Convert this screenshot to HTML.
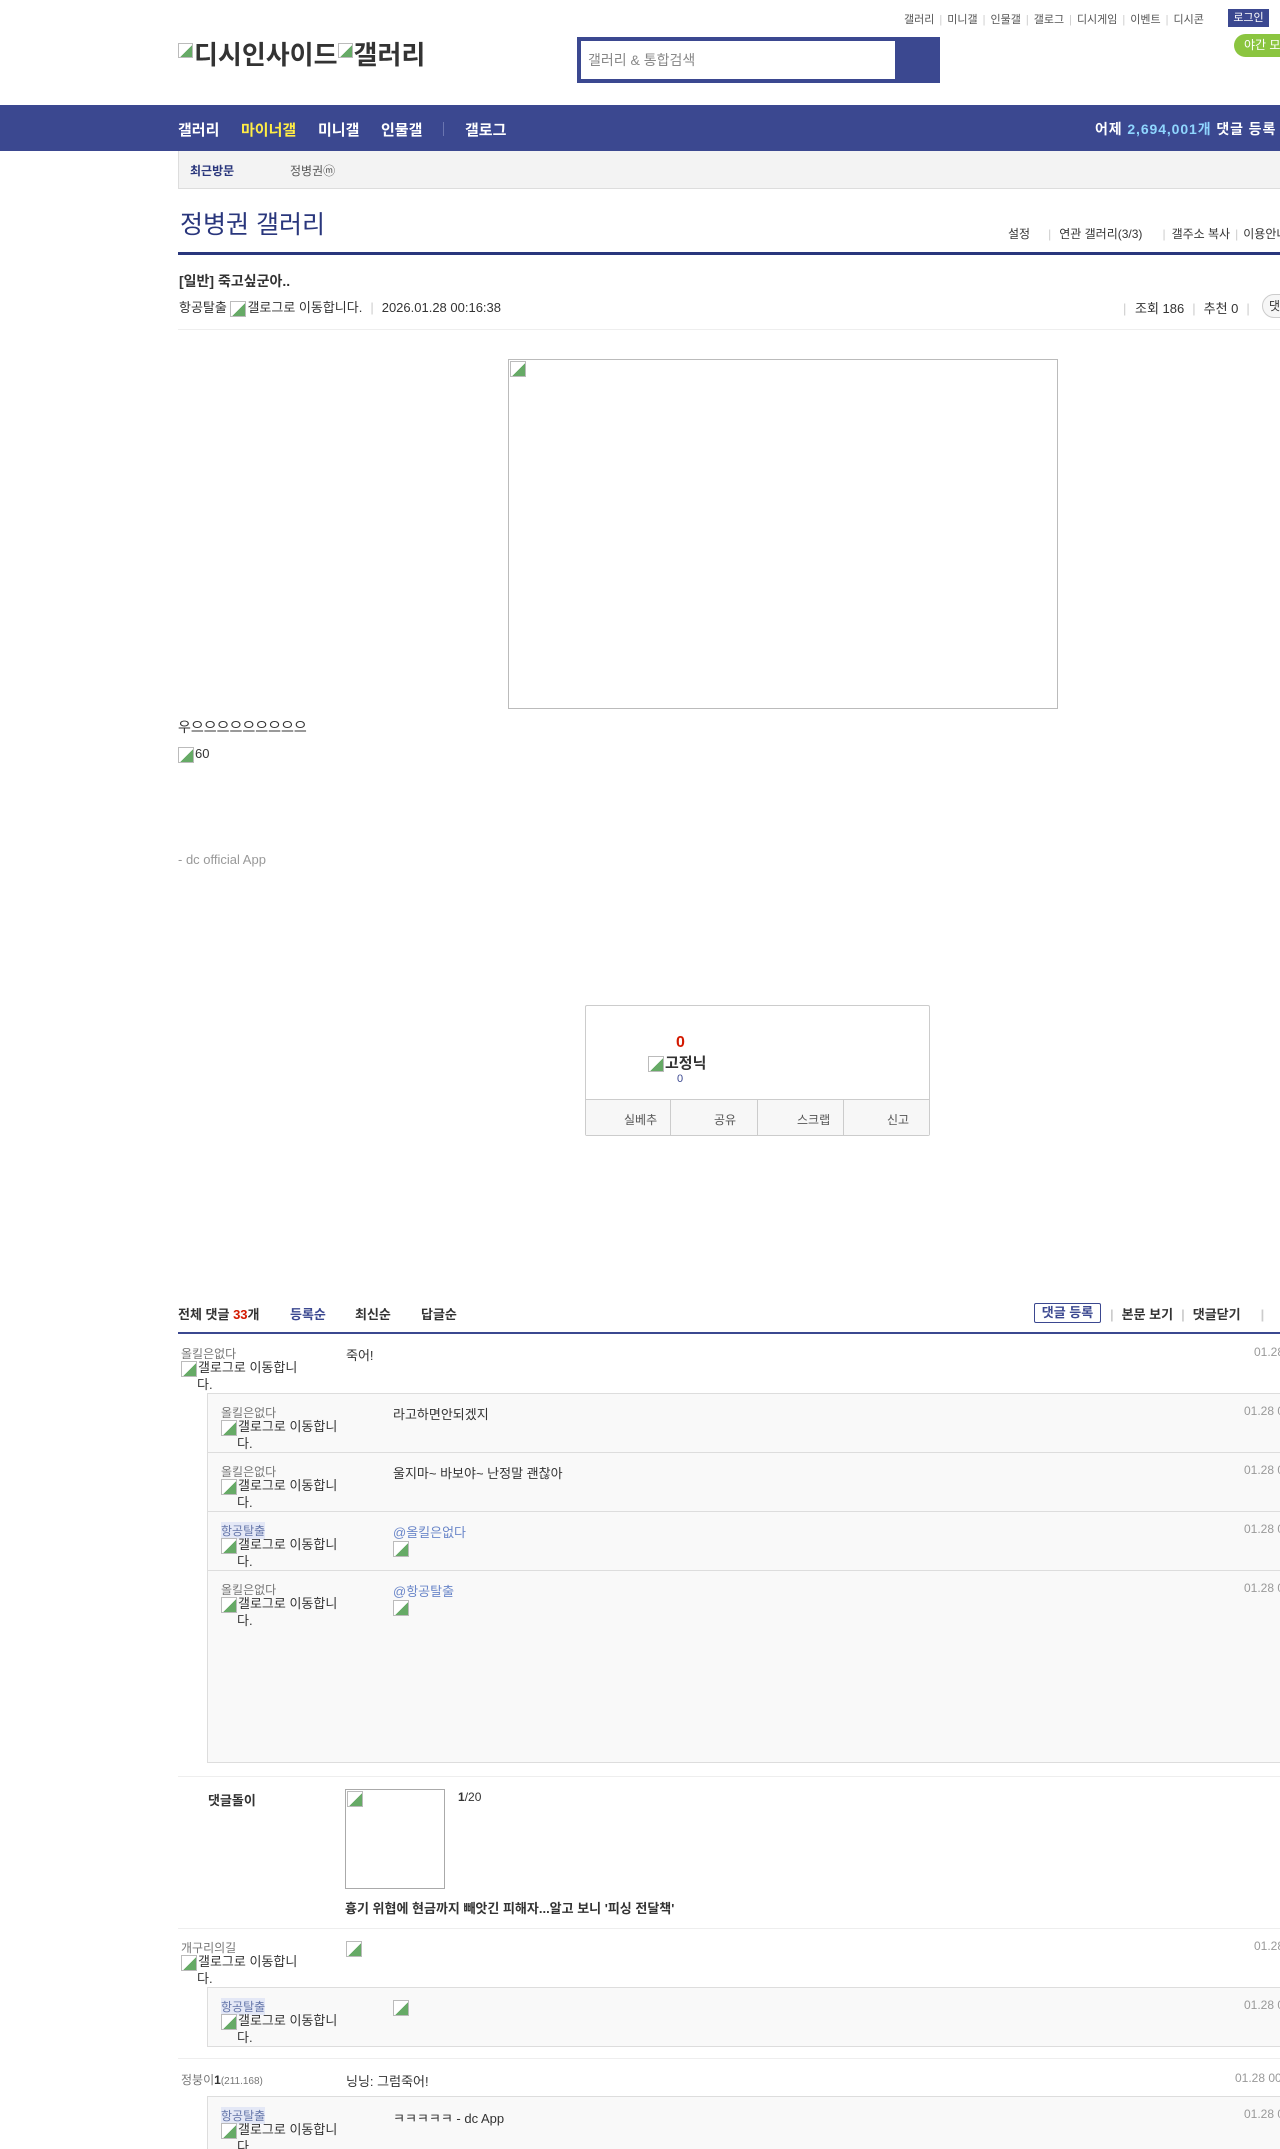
<!DOCTYPE html>
<html lang="ko"><head><meta charset="utf-8">
<style>
*{margin:0;padding:0;box-sizing:border-box}
html,body{width:1280px;height:2149px;overflow:hidden;background:#fff}
body{position:relative;font-family:"Liberation Sans","Noto Sans CJK KR",sans-serif;font-size:13px;color:#333}
.a{position:absolute;white-space:nowrap}
.ic{display:inline-block;width:16px;height:16px;border:1px solid #bbb;background:linear-gradient(135deg,#fff 55%,#6a6 55%);vertical-align:middle;margin-right:1px}
.sep{color:#ccc;margin:0 5px}
.nick{color:#777;font-size:12px}
.nick.hl{background:#e4e8f6;color:#6677aa}
.gal{font-size:13px;color:#333;line-height:15px;white-space:normal;width:130px}
.gal i{font-style:normal;padding-left:16px}
.date{color:#999;font-size:12px}
.hline{position:absolute;left:178px;right:0;height:1px;background:#eee}
.rbox{position:absolute;left:207px;right:-2px;background:#f9f9f9;border:1px solid #ddd}
.rrow{position:absolute;left:0;right:0;border-top:1px solid #ddd}
</style></head><body>

<div class="a" style="left:904px;top:11px;font-size:11px;color:#555">갤러리<span class="sep">|</span>미니갤<span class="sep">|</span>인물갤<span class="sep">|</span>갤로그<span class="sep">|</span>디시게임<span class="sep">|</span>이벤트<span class="sep">|</span>디시콘</div>
<div class="a" style="left:1228px;top:9px;width:41px;height:18px;background:#3b4890;color:#fff;font-size:11px;text-align:center;line-height:18px">로그인</div>
<div class="a" style="left:1234px;top:34px;width:60px;height:23px;background:#8bc540;border-radius:12px;color:#fff;font-size:12px;line-height:23px;padding-left:10px">야간 모드</div>

<div class="a" style="left:178px;top:40px;font-size:26px;font-weight:bold;color:#333;line-height:30px"><span class="ic" style="width:15px;height:15px;vertical-align:top;margin-top:3px"></span>디시인사이드<span class="ic" style="width:15px;height:15px;vertical-align:top;margin-top:3px"></span>갤러리</div>

<div class="a" style="left:577px;top:37px;width:363px;height:46px;background:#3b4890"></div>
<div class="a" style="left:581px;top:41px;width:314px;height:38px;background:#fff;color:#888;font-size:14px;line-height:38px;padding-left:7px">갤러리 &amp; 통합검색</div>

<div class="a" style="left:0;top:105px;width:1280px;height:46px;background:#3b4890"></div>
<div class="a" style="left:178px;top:119px;font-size:15px;font-weight:bold;color:#fff">갤러리</div>
<div class="a" style="left:241px;top:119px;font-size:15px;font-weight:bold;color:#ffed45">마이너갤</div>
<div class="a" style="left:318px;top:119px;font-size:15px;font-weight:bold;color:#fff">미니갤</div>
<div class="a" style="left:381px;top:119px;font-size:15px;font-weight:bold;color:#fff">인물갤</div>
<div class="a" style="left:443px;top:122px;width:1px;height:14px;background:#6a75b0"></div>
<div class="a" style="left:465px;top:119px;font-size:15px;font-weight:bold;color:#fff">갤로그</div>
<div class="a" style="left:1095px;top:119px;font-size:14px;font-weight:bold;color:#fff;letter-spacing:0.9px">어제 <span style="color:#8fd6ff">2,694,001개</span> 댓글 등록</div>

<div class="a" style="left:178px;top:151px;width:1110px;height:38px;background:#f3f3f3;border:1px solid #ddd;border-top:none"></div>
<div class="a" style="left:190px;top:162px;font-size:12px;font-weight:bold;color:#29367c">최근방문</div>
<div class="a" style="left:290px;top:162px;font-size:12px;color:#555">정병권ⓜ</div>

<div class="a" style="left:180px;top:205px;font-size:25px;color:#29367c">정병권 갤러리</div>
<div class="a" style="left:1008px;top:225px;font-size:12px;color:#333">설정<span class="sep" style="margin:0 8px 0 18px">|</span>연관 갤러리(3/3)<span class="sep" style="margin:0 6px 0 20px">|</span>갤주소 복사<span class="sep">|</span>이용안내</div>
<div class="a" style="left:178px;top:252px;width:1110px;height:3px;background:#29367c"></div>

<div class="a" style="left:179px;top:271px;font-size:14px;font-weight:bold;color:#333">[일반] 죽고싶군아..</div>
<div class="a" style="left:179px;top:297px;font-size:13px;color:#333">항공탈출 <span class="ic"></span>갤로그로 이동합니다.<span class="sep" style="margin:0 8px">|</span>2026.01.28 00:16:38</div>
<div class="a" style="left:1118px;top:298px;font-size:13px;color:#333"><span class="sep">|</span> 조회 186<span class="sep" style="margin:0 8px">|</span>추천 0<span class="sep" style="margin:0 8px">|</span></div>
<div class="a" style="left:1262px;top:294px;width:40px;height:24px;border:1px solid #ccc;border-radius:12px;background:#f6f6f6;font-size:12px;line-height:22px;padding-left:6px">댓글</div>
<div class="hline" style="top:329px"></div>

<div class="a" style="left:508px;top:359px;width:550px;height:350px;border:1px solid #bbb"><span class="ic" style="position:absolute;left:1px;top:1px"></span></div>
<div class="a" style="left:178px;top:717px;font-size:14px;color:#333">우으으으으으으으으으</div>
<div class="a" style="left:178px;top:746px;font-size:13px;color:#333"><span class="ic"></span>60</div>
<div class="a" style="left:178px;top:852px;font-size:13px;color:#999">- dc official App</div>

<div class="a" style="left:585px;top:1005px;width:345px;height:131px;border:1px solid #ccc;border-radius:2px"></div>
<div class="a" style="left:676px;top:1034px;font-size:16px;font-weight:bold;color:#d31900">0</div>
<div class="a" style="left:648px;top:1052px;font-size:15px;font-weight:bold;color:#333"><span class="ic"></span>고정닉</div>
<div class="a" style="left:677px;top:1073px;font-size:11px;color:#3b4890">0</div>
<div class="a" style="left:586px;top:1099px;width:343px;height:36px;background:#f7f7f7;border-top:1px solid #ccc"></div>
<div class="a" style="left:670px;top:1100px;width:1px;height:35px;background:#ccc"></div>
<div class="a" style="left:757px;top:1100px;width:1px;height:35px;background:#ccc"></div>
<div class="a" style="left:843px;top:1100px;width:1px;height:35px;background:#ccc"></div>
<div class="a" style="left:624px;top:1111px;font-size:12px;color:#555">실베추</div>
<div class="a" style="left:714px;top:1111px;font-size:12px;color:#555">공유</div>
<div class="a" style="left:797px;top:1111px;font-size:12px;color:#555">스크랩</div>
<div class="a" style="left:887px;top:1111px;font-size:12px;color:#555">신고</div>

<div class="a" style="left:178px;top:1304px;font-size:13px;font-weight:bold;color:#333">전체 댓글 <span style="color:#d31900">33</span>개</div>
<div class="a" style="left:290px;top:1304px;font-size:13px;font-weight:bold;color:#3b4890">등록순</div>
<div class="a" style="left:355px;top:1304px;font-size:13px;font-weight:bold;color:#333">최신순</div>
<div class="a" style="left:421px;top:1304px;font-size:13px;font-weight:bold;color:#333">답글순</div>
<div class="a" style="left:1034px;top:1303px;width:67px;height:20px;border:1px solid #3b4890;border-radius:2px;font-size:13px;font-weight:bold;color:#3b4890;text-align:center;line-height:18px">댓글 등록</div>
<div class="a" style="left:1110px;top:1304px;font-size:13px;font-weight:bold;color:#333"><span class="sep" style="margin:0 8px 0 0">|</span>본문 보기<span class="sep" style="margin:0 8px">|</span>댓글닫기<span class="sep" style="margin:0 0 0 20px">|</span></div>
<div class="a" style="left:178px;top:1332px;width:1110px;height:2px;background:#3b4890"></div>

<div class="a nick" style="left:181px;top:1345px">올킬은없다</div>
<div class="a gal" style="left:181px;top:1360px"><span class="ic"></span>갤로그로 이동합니<br><i>다.</i></div>
<div class="a" style="left:346px;top:1345px">죽어!</div>
<div class="a date" style="left:1254px;top:1345px">01.28 00:18:02</div>

<div class="rbox" style="top:1393px;height:370px">
 <div class="rrow" style="top:58px"></div>
 <div class="rrow" style="top:117px"></div>
 <div class="rrow" style="top:176px"></div>
</div>
<div class="a nick" style="left:221px;top:1404px">올킬은없다</div>
<div class="a gal" style="left:221px;top:1419px"><span class="ic"></span>갤로그로 이동합니<br><i>다.</i></div>
<div class="a" style="left:393px;top:1404px">라고하면안되겠지</div>
<div class="a date" style="left:1244px;top:1404px">01.28 00:18:30</div>

<div class="a nick" style="left:221px;top:1463px">올킬은없다</div>
<div class="a gal" style="left:221px;top:1478px"><span class="ic"></span>갤로그로 이동합니<br><i>다.</i></div>
<div class="a" style="left:393px;top:1463px">울지마~ 바보야~ 난정말 괜찮아</div>
<div class="a date" style="left:1244px;top:1463px">01.28 00:19:02</div>

<div class="a nick hl" style="left:221px;top:1522px">항공탈출</div>
<div class="a gal" style="left:221px;top:1537px"><span class="ic"></span>갤로그로 이동합니<br><i>다.</i></div>
<div class="a" style="left:393px;top:1522px;color:#6b87c9">@올킬은없다</div>
<div class="a" style="left:393px;top:1540px"><span class="ic"></span></div>
<div class="a date" style="left:1244px;top:1522px">01.28 00:19:40</div>

<div class="a nick" style="left:221px;top:1581px">올킬은없다</div>
<div class="a gal" style="left:221px;top:1596px"><span class="ic"></span>갤로그로 이동합니<br><i>다.</i></div>
<div class="a" style="left:393px;top:1581px;color:#6b87c9">@항공탈출</div>
<div class="a" style="left:393px;top:1599px"><span class="ic"></span></div>
<div class="a date" style="left:1244px;top:1581px">01.28 00:20:11</div>

<div class="hline" style="top:1776px"></div>

<div class="a" style="left:208px;top:1790px;font-size:13px;font-weight:bold;color:#333">댓글돌이</div>
<div class="a" style="left:345px;top:1789px;width:100px;height:100px;border:1px solid #aaa"><span class="ic" style="position:absolute;left:1px;top:1px"></span></div>
<div class="a" style="left:458px;top:1790px;font-size:12px;color:#333"><b>1</b>/20</div>
<div class="a" style="left:345px;top:1898px;font-size:13px;font-weight:bold;color:#333">흉기 위협에 현금까지 빼앗긴 피해자...알고 보니 '피싱 전달책'</div>

<div class="hline" style="top:1928px"></div>

<div class="a nick" style="left:181px;top:1939px">개구리의길</div>
<div class="a gal" style="left:181px;top:1954px"><span class="ic"></span>갤로그로 이동합니<br><i>다.</i></div>
<div class="a" style="left:346px;top:1940px"><span class="ic"></span></div>
<div class="a date" style="left:1254px;top:1939px">01.28 00:25:13</div>

<div class="rbox" style="top:1987px;height:60px"></div>
<div class="a nick hl" style="left:221px;top:1998px">항공탈출</div>
<div class="a gal" style="left:221px;top:2013px"><span class="ic"></span>갤로그로 이동합니<br><i>다.</i></div>
<div class="a" style="left:393px;top:1999px"><span class="ic"></span></div>
<div class="a date" style="left:1244px;top:1998px">01.28 00:26:02</div>

<div class="hline" style="top:2058px"></div>

<div class="a nick" style="left:181px;top:2071px">정붕이<b style="color:#333">1</b><span style="font-size:10px">(211.168)</span></div>
<div class="a" style="left:346px;top:2071px">닝닝: 그럼죽어!</div>
<div class="a date" style="left:1235px;top:2071px">01.28 00:30:21</div>

<div class="rbox" style="top:2096px;height:80px"></div>
<div class="a nick hl" style="left:221px;top:2107px">항공탈출</div>
<div class="a gal" style="left:221px;top:2122px"><span class="ic"></span>갤로그로 이동합니<br><i>다.</i></div>
<div class="a" style="left:393px;top:2108px">ㅋㅋㅋㅋㅋ - dc App</div>
<div class="a date" style="left:1244px;top:2107px">01.28 00:31:00</div>

</body></html>
